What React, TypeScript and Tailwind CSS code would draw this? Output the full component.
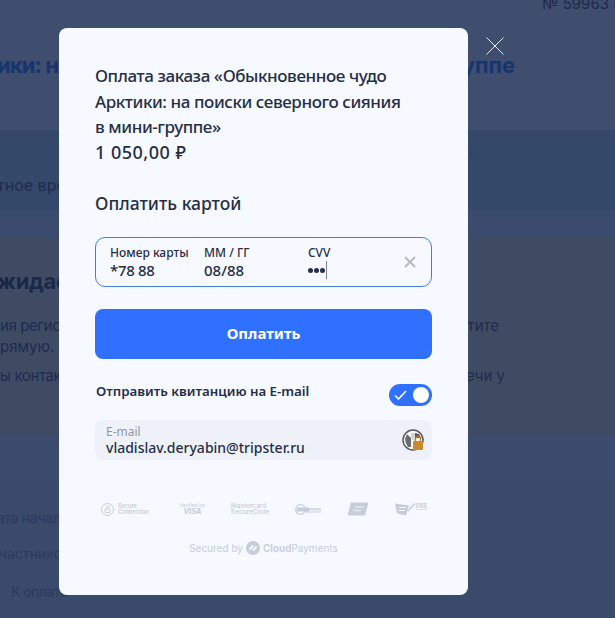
import React from 'react';

const inter = "font-['Inter',sans-serif]";
const modalFont = "font-['Noto_Sans',sans-serif]";

// Page behind the overlay, only the edges stay visible
const BackPage = () => (
    <div className={`${inter} h-[618px] overflow-hidden bg-[#3a4a6b] text-[#1f2c50]`}>
        <div className="h-[130px] bg-[#3f4d6e]">
            <div className="flex justify-end h-[11px] overflow-hidden">
                <span className="text-[15px] leading-[18px] -mt-[5px] -mr-[17px] whitespace-nowrap text-[#1c2a4d]">№ 59963 45</span>
            </div>
            <div className="flex justify-between mt-[41px] text-[22px] leading-[26px] font-bold text-[#16356e]">
                <span className="-ml-[3px] tracking-[-0.9px]">ики: на</span>
                <span className="mr-[100px]">уппе</span>
            </div>
        </div>
        <div className="h-[80px] bg-[#34486a] text-[15px] leading-[18px]">
            <div className="flex justify-end pt-[17px] h-[46px] text-[11px] leading-[14px] text-[#2e4265]">
                <span className="mr-[139px]">ь</span>
            </div>
            <span className="-ml-[3px] block text-[16px] whitespace-nowrap">тное врем</span>
        </div>
        <div className="h-[28px] bg-[#3a4b6e]" />
        <div className="h-[197px] bg-[#3f4b63] pt-[29px]">
            <div className="text-[22px] leading-[28px] font-bold text-[#1a2848] -ml-[3px] tracking-[-0.3px] whitespace-nowrap">жидает</div>
            <div className="flex justify-between mt-[20px] text-[15px] leading-[21px] whitespace-nowrap">
                <span className="tracking-[-0.4px]">ия регистр</span>
                <span className="mr-[116px]">тите</span>
            </div>
            <div className="text-[15px] leading-[21px]">рямую.</div>
            <div className="flex justify-between mt-[8px] text-[15px] leading-[21px] whitespace-nowrap">
                <span className="tracking-[-0.4px]">ы контакт</span>
                <span className="mr-[110px]">ечи у</span>
            </div>
        </div>
        <div className="h-[45px] bg-[#3c4c6e]" />
        <div className="pt-[28px] text-[14px] leading-[20px] text-[#2c3a5e] whitespace-nowrap">
            <div className="-ml-[3px] tracking-[-0.3px]">ата начала</div>
            <div className="mt-[16px] -ml-[1px]">частников</div>
            <div className="mt-[18px] ml-[11px] tracking-[-0.5px]">К оплате</div>
        </div>
    </div>
);

const Logos = () => (
    <div className="flex items-center justify-between h-[20px] pl-[6px] pr-[5px] text-[#c6cdd9] font-['Inter',sans-serif]">
        <div className="flex items-center gap-[4px]">
            <svg width="13" height="13" viewBox="0 0 13 13" fill="none" stroke="#c6cdd9" strokeWidth="1">
                <circle cx="6.5" cy="6.5" r="6" />
                <rect x="4" y="6" width="5" height="3.6" rx="0.6" />
                <path d="M5 6V4.6a1.5 1.5 0 0 1 3 0V6" />
            </svg>
            <div className="text-[5.5px] leading-[6px] font-semibold">Secure<br />Connection</div>
        </div>
        <div className="text-center ml-[5px]">
            <div className="text-[5px] leading-[6px]">Verified by</div>
            <div className="text-[7.5px] leading-[8px] font-bold italic">VISA</div>
        </div>
        <div className="text-[6.5px] leading-[6.5px] font-medium">Mastercard<br />SecureCode</div>
        <svg width="26" height="11" viewBox="0 0 26 11" fill="none">
            <circle cx="5.5" cy="5.5" r="4.8" stroke="#c6cdd9" strokeWidth="1.2" />
            <rect x="2" y="3.5" width="12" height="4" fill="#c6cdd9" />
            <rect x="14" y="4" width="12" height="2.5" fill="#d6dbe4" />
            <rect x="11" y="7.5" width="15" height="1" fill="#c6cdd9" />
        </svg>
        <svg width="22" height="14" viewBox="0 0 22 14">
            <path d="M4 0.5H21.5L18 13.5H0.5Z" fill="#c6cdd9" />
            <path d="M8 5H17M6 8.5H14" stroke="#e4e8ef" strokeWidth="1.3" />
        </svg>
        <div className="flex items-start gap-[1px]">
            <svg width="20" height="13" viewBox="0 0 20 13">
                <path d="M0 0.5L14 2.5L11 12.5L2 10.5Z" fill="#c6cdd9" />
                <path d="M13 8L20 0.5" stroke="#c6cdd9" strokeWidth="1.5" fill="none" />
                <path d="M4 4.5H11M4 7.5H10" stroke="#f6f9ff" strokeWidth="1" />
            </svg>
            <div className="text-[5.5px] leading-[6px] font-bold border-b border-[#d6dbe4]">DSS</div>
        </div>
    </div>
);

const PayModal = () => (
    <div className={`${modalFont} absolute left-[59px] top-[28px] w-[409px] h-[567px] rounded-[8px] bg-[#f6f9ff] pt-[35px] pl-[36px] pr-[36px] text-[#262e45]`}>
        <div className="text-[17px] leading-[25.6px] font-medium tracking-[-0.42px]">
            Оплата заказа «Обыкновенное чудо<br />
            Арктики: на поиски северного сияния<br />
            в мини-группе»
        </div>
        <div className="text-[18px] leading-[25.6px] font-medium tracking-[0.5px]">1 050,00 ₽</div>
        <div className="mt-[26px] text-[17.5px] leading-[25px] font-medium">Оплатить картой</div>

        <div className="mt-[21px] h-[50px] rounded-[10px] border border-[#3f7cf0] flex items-center pl-[14px] pr-[15px]">
            <div className="w-[94px] pt-[2px]">
                <div className="text-[12px] leading-[14px] font-medium">Номер карты</div>
                <div className="text-[15px] leading-[20px] font-medium tracking-[-0.3px]">*78 88</div>
            </div>
            <div className="w-[104px] pt-[2px]">
                <div className="text-[12px] leading-[14px] font-medium">ММ / ГГ</div>
                <div className="text-[15px] leading-[20px] font-medium">08/88</div>
            </div>
            <div className="flex-1 pt-[2px]">
                <div className="text-[12px] leading-[14px] font-medium">CVV</div>
                <div className="flex items-center h-[20px] gap-[1px]">
                    <span className="w-[5px] h-[5px] rounded-full bg-[#262e45]" />
                    <span className="w-[5px] h-[5px] rounded-full bg-[#262e45]" />
                    <span className="w-[5px] h-[5px] rounded-full bg-[#262e45]" />
                    <span className="w-[1px] h-[18px] bg-[#7c8290]" />
                </div>
            </div>
            <svg width="12" height="12" viewBox="0 0 12 12" stroke="#b3bac6" strokeWidth="2" fill="none">
                <path d="M1 1L11 11M11 1L1 11" />
            </svg>
        </div>

        <div className="mt-[22px] h-[50px] pb-[2px] rounded-[8px] bg-[#3070ff] flex items-center justify-center text-white text-[15px] font-bold">
            Оплатить
        </div>

        <div className="mt-[25px] h-[22px] flex items-center justify-between">
            <span className="text-[13.3px] leading-[16px] -mt-[8px] font-semibold ml-[1px]">Отправить квитанцию на E-mail</span>
            <div className="w-[43px] h-[22px] rounded-full bg-[#3070ff] flex items-center justify-between pl-[5px] pr-[3px]">
                <svg width="13" height="10" viewBox="0 0 13 10" fill="none" stroke="#fff" strokeWidth="1.6">
                    <path d="M1 5.5L4.5 9L12 1" />
                </svg>
                <span className="w-[16px] h-[16px] rounded-full bg-white" />
            </div>
        </div>

        <div className="mt-[14px] h-[40px] rounded-[8px] bg-[#eef2f8] flex items-center justify-between pl-[11px] pr-[8px]">
            <div>
                <div className="text-[12px] leading-[15px] text-[#8f97a6]">E-mail</div>
                <div className="text-[14px] leading-[17px] font-medium">vladislav.deryabin@tripster.ru</div>
            </div>
            <svg width="22" height="22" viewBox="0 0 22 22">
                <circle cx="11" cy="11" r="10" fill="#fff" stroke="#55585e" strokeWidth="1.5" />
                <path d="M5 5L9 9V18H6Q3 14 3 10Z" fill="#6a6c70" />
                <path d="M13 4L17 5L19 9L13 9Z" fill="#55585e" />
                <path d="M9 4H13V9L11 12L9 9Z" fill="#d5d6d8" />
                <rect x="11" y="12" width="10" height="9" rx="1" fill="#c68a30" />
                <path d="M13.5 12V10a2.5 2.5 0 0 1 5 0v2" fill="none" stroke="#b07a28" strokeWidth="1.4" />
            </svg>
        </div>

        <div className="mt-[39px]">
            <Logos />
        </div>
        <div className="mt-[22px] flex items-center justify-center gap-[3px] text-[10px] leading-[14px] text-[#c6cdd9] font-['Inter',sans-serif]">
            <span>Secured by</span>
            <svg width="14" height="14" viewBox="0 0 14 14" fill="none">
                <circle cx="7" cy="7" r="7" fill="#c6cdd9" />
                <path d="M3.5 8.5L7 4.5M7 9.5L10.5 5.5" stroke="#f6f9ff" strokeWidth="2" />
            </svg>
            <span><span className="font-semibold">Cloud</span>Payments</span>
        </div>
    </div>
);

// Close cross sits over the dark backdrop
const CloseCross = () => (
    <svg className="absolute left-[486px] top-[37px]" width="18" height="18" viewBox="0 0 18 18" stroke="#e8ecf4" strokeWidth="1" fill="none">
        <path d="M0.5 0.5L17.5 17.5M17.5 0.5L0.5 17.5" />
    </svg>
);

const App = () => {
    return (
        <div className="relative w-[615px] h-[618px] overflow-hidden">
            <BackPage />
            <PayModal />
            <CloseCross />
        </div>
    );
};

export default App;
